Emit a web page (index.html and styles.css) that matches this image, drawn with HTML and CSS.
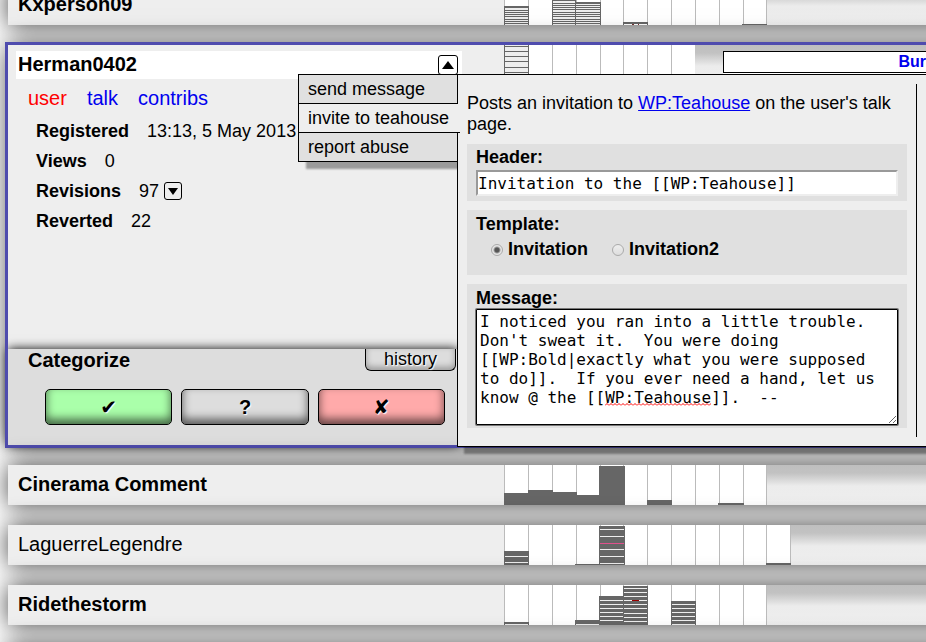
FILE: index.html
```html
<!DOCTYPE html>
<html lang="en">
<head>
<meta charset="utf-8">
<title>Newcomers</title>
<link rel="stylesheet" href="styles.css">
</head>
<body>
<svg class="defs" width="0" height="0" aria-hidden="true">
  <defs>
    <path id="grid" d="M.5 0V40M24.5 0V40M48.5 0V40M72.5 0V40M96.5 0V40M119.5 0V40M143.5 0V40M167.5 0V40M191.5 0V40M215.5 0V40M239.5 0V40M262.5 0V40" stroke="#bbb"/>
  </defs>
</svg>
<main class="list">
  <section class="row">
    <h2 class="name">Kxperson09</h2>
    <svg class="graph" width="263" height="40" aria-hidden="true">
      <use href="#grid"/>
      <path d="M0 21h25v19H0zM48 12h24v28H48zM71 17h26v23H71zM119 37h25v2h-25zM119 39h1v1h-1zM143 39h1v1h-1zM238 39h26v1h-26z" fill="#666"/>
      <path d="M1 23h23v2H1zM1 26h23v1H1zM1 28h23v1H1zM1 30h23v1H1zM1 32h23v2H1zM1 35h23v1H1zM1 37h23v1H1zM1 39h23v1H1z" fill="#eee"/>
      <path d="M49 16h22v2H49zM49 19h22v1H49zM49 21h22v1H49zM49 23h22v1H49zM49 25h22v2H49zM49 28h22v1H49zM49 30h22v1H49zM49 32h22v2H49zM49 35h22v1H49zM49 37h22v1H49zM49 39h22v1H49z" fill="#eee"/>
      <path d="M72 19h24v1H72zM72 21h24v1H72zM72 23h24v1H72zM72 25h24v2H72zM72 28h24v1H72zM72 30h24v1H72zM72 32h24v2H72zM72 35h24v1H72zM72 37h24v1H72zM72 39h24v1H72z" fill="#eee"/>
      <path d="M128 39.500h2M134 39.500h1" stroke="#733"/>
    </svg>
    <div class="rest"></div>
  </section>

  <section class="row open">
    <div class="details">
      <div class="title">
        <h2>Herman0402</h2>
        <button class="toggle" aria-label="Close actions"><svg width="12" height="8" aria-hidden="true"><path d="M6 0L12 8H0z"/></svg></button>
      </div>
      <nav class="links"><a class="missing" href="#user">user</a><a href="#talk">talk</a><a href="#contribs">contribs</a></nav>
      <dl class="facts">
        <div><dt>Registered</dt><dd>13:13, 5 May 2013</dd></div>
        <div><dt>Views</dt><dd>0</dd></div>
        <div><dt>Revisions</dt><dd>97</dd><dd><button class="more" aria-label="Show revisions"><svg width="10" height="7" aria-hidden="true"><path d="M0 0H10L5 7z"/></svg></button></dd></div>
        <div><dt>Reverted</dt><dd>22</dd></div>
      </dl>
      <div class="categorize">
        <div class="cathead"><h3>Categorize</h3><button class="history">history</button></div>
        <div class="choices">
          <button class="choice good" aria-label="Good">✔</button>
          <button class="choice" aria-label="Unsure">?</button>
          <button class="choice bad" aria-label="Bad">✘</button>
        </div>
      </div>
    </div>
    <svg class="graph" width="191" height="40" aria-hidden="true">
      <use href="#grid"/>
      <path d="M0 0h25v40H0z" fill="#666"/>
      <path d="M1 0h23v1H1zM1 2h23v4H1zM1 7h23v4H1zM1 12h23v4H1zM1 17h23v5H1zM1 23h23v4H1zM1 28h23v5H1z" fill="#eee"/>
    </svg>
    <div class="rest"><div class="topic"><a href="#topic">Bur</a></div></div>

    <div class="menu">
      <button>send message</button>
      <button class="current">invite to teahouse</button>
      <button>report abuse</button>
    </div>

    <div class="popup">
      <form class="invite">
        <p>Posts an invitation to <a href="#teahouse">WP:Teahouse</a> on the user's talk page.</p>
        <div class="field">
          <label for="header">Header:</label>
          <input id="header" class="line" type="text" value="Invitation to the [[WP:Teahouse]]">
        </div>
        <fieldset class="field template">
          <legend>Template:</legend>
          <div class="options">
            <label><input type="radio" name="template" checked>Invitation</label>
            <label><input type="radio" name="template">Invitation2</label>
          </div>
        </fieldset>
        <div class="field message">
          <label for="message">Message:</label>
          <div class="editor">
            <textarea id="message" spellcheck="false">I noticed you ran into a little trouble.
Don't sweat it.  You were doing
[[WP:Bold|exactly what you were supposed
to do]].  If you ever need a hand, let us
know @ the [[WP:Teahouse]].  --</textarea>
            <svg class="squiggle" height="3" aria-hidden="true"><defs><pattern id="wave" width="4" height="3" patternUnits="userSpaceOnUse"><path d="M0 2.500L2 .5L4 2.500" fill="none" stroke="red"/></pattern></defs><rect width="100%" height="3" fill="url(#wave)"/></svg>
          </div>
        </div>
      </form>
      <div class="divider"></div>
    </div>
  </section>

  <section class="row">
    <h2 class="name">Cinerama Comment</h2>
    <svg class="graph" width="263" height="40" aria-hidden="true">
      <use href="#grid"/>
      <path d="M0 28h24v12H0zM24 25h25v15H24zM48 27h25v13H48zM72 30h24v10H72zM95 1h26v39H95zM143 35h25v5h-25zM214 38h26v2h-26z" fill="#666"/>
    </svg>
    <div class="rest"></div>
  </section>

  <section class="row">
    <h2 class="name plain">LaguerreLegendre</h2>
    <svg class="graph" width="287" height="40" aria-hidden="true">
      <use href="#grid"/>
      <path d="M286.500 0V40" stroke="#bbb"/>
      <path d="M0 26h25v14H0zM71 39h26v1H71zM95 1h26v39H95zM262 38h25v2h-25z" fill="#666"/>
      <path d="M1 31.500h23M1 37.500h23M96 4.500h24M96 11.500h24M96 24.500h24M96 31.500h24M96 38.500h24" stroke="#eee"/>
      <path d="M96 18.500h24" stroke="#e0508c"/>
    </svg>
    <div class="rest"></div>
  </section>

  <section class="row">
    <h2 class="name">Ridethestorm</h2>
    <svg class="graph" width="263" height="40" aria-hidden="true">
      <use href="#grid"/>
      <path d="M0 37h25v3H0zM71 35h25v5H71zM95 11h25v29H95zM119 1h25v39h-25zM167 16h25v24h-25z" fill="#666"/>
      <path d="M1 39.500h23M72 39.500h23M96 15.500h23M96 19.500h23M96 23.500h23M96 27.500h23M96 31.500h23M96 35.500h23M120 3.500h23M120 7.500h23M120 11.500h23M120 15.500h23M120 19.500h23M120 23.500h23M120 28.500h23M120 32.500h23M120 36.500h23M168 19.500h23M168 23.500h23M168 27.500h23M168 31.500h23M168 35.500h23M168 39.500h23" stroke="#eee"/>
      <path d="M128 15.500h7" stroke="#900"/>
    </svg>
    <div class="rest"></div>
  </section>

  <section class="row"></section>
</main>
</body>
</html>
```

FILE: styles.css
```css
* { box-sizing: border-box; }

html { height: 100%; overflow: hidden; }

body {
  height: 100%;
  margin: 0;
  overflow: hidden;
  background: #fff;
  color: #000;
  font: 18px/21px "Liberation Sans", Arial, sans-serif;
}

h2, h3, p, dl, dd { margin: 0; }

button, input, textarea { font: inherit; color: inherit; margin: 0; }

.defs { position: absolute; }

/* The list is scrolled slightly and runs past the right edge of the window. */
.list {
  display: flex;
  flex-direction: column;
  gap: 20px;
  margin: -15px -40px 0 8px;
}

.row {
  position: relative;
  display: grid;
  grid-template-columns: 496px auto 1fr;
  flex: none;
  min-height: 40px;
  background: #eee;
  box-shadow: 0 0 25px rgba(0, 0, 0, .75);
}

.name { padding: 0 10px; font-size: 20px; line-height: 38px; }
.plain { font-weight: normal; }

.graph { display: block; background: #fff; }

.rest {
  height: 40px;
  background: linear-gradient(#bfbfbf, #c2c2c2 8px, #ececec 21px, #eee);
}

.open { min-height: 400px; outline: 3px solid #4f4cae; }

.details {
  display: flex;
  flex-direction: column;
  width: 454px;
  padding-top: 6px;
}

.title {
  display: flex;
  justify-content: space-between;
  height: 28px;
  margin-left: 8px;
  padding: 0 4px 0 2px;
  background: #fff;
}
.title h2 { font-size: 20px; line-height: 26px; }

.toggle, .more {
  display: flex;
  align-items: center;
  justify-content: center;
  padding: 0;
  border: 1px solid #000;
  border-radius: 3px;
  background: #fff;
}
.toggle { width: 20px; height: 20px; margin-top: 4px; }
.more { width: 18px; height: 18px; background: #eee; }

.links { display: flex; gap: 20px; padding: 6px 20px 0; font-size: 20px; line-height: 26px; }
.links a { color: #00e; text-decoration: none; }
.links .missing { color: #f00; }

.facts { padding: 5px 28px 0; line-height: 30px; }
.facts div { display: flex; align-items: center; height: 30px; }
.facts dt { margin-right: 18px; font-weight: bold; }
.facts dd + dd { margin-left: 5px; }

.categorize {
  width: 450px;
  height: 96px;
  margin-top: auto;
  background: #ddd;
  box-shadow: 0 0 10px #000;
}
.cathead { display: flex; justify-content: space-between; padding: 0 2px 0 20px; }
.cathead h3 { font-size: 20px; line-height: 23px; }

.history {
  width: 91px;
  height: 22px;
  padding: 0;
  border: 1px solid #000;
  border-top: 0;
  border-radius: 0 0 6px 6px;
  background: #ddd;
  box-shadow: inset 0 -3px 6px rgba(0, 0, 0, .3);
  line-height: 19px;
  text-shadow: 1px 1px 1px #fff;
}

.choices { display: flex; gap: 9px; padding: 17px 13px 0 37px; }

.choice {
  flex: 1;
  height: 36px;
  padding: 0;
  border: 1px solid #000;
  border-radius: 5px;
  background: #ddd;
  box-shadow: inset 0 -5px 10px rgba(0, 0, 0, .6);
  font-family: "Liberation Sans", "DejaVu Sans", sans-serif;
  font-size: 20px;
  font-weight: bold;
  line-height: 32px;
  text-shadow: 1px 1px 1px #fff;
}
.good { background: #afa; }
.bad { background: #faa; }

.topic {
  height: 22px;
  margin: 6px 0 0 28px;
  padding-right: 40px;
  border: 1px solid #000;
  border-right: 0;
  background: #fff;
  box-shadow: 0 1px #fff;
  font-size: 16px;
  font-weight: bold;
  line-height: 20px;
  text-align: right;
}
.topic a { color: #00e; text-decoration: none; }

/* Action menu and the form that opens from it */
.menu {
  position: absolute;
  z-index: 3;
  top: 29px;
  left: 290px;
  width: 160px;
  border: solid #000;
  border-width: 1px 0 0 1px;
}
.menu::before {
  content: "";
  position: absolute;
  z-index: -1;
  inset: 0 1px 0 0;
  box-shadow: 7px 7px 2px rgba(0, 0, 0, .35);
  clip-path: inset(0 0 -12px 0);
}
.menu button {
  display: block;
  width: 100%;
  height: 29px;
  padding: 0 9px;
  border: solid #000;
  border-width: 0 1px 1px 0;
  background: #e0e0e0;
  line-height: 28px;
  text-align: left;
}
.menu .current { width: 161px; border-right: 0; background: #eee; }

.popup {
  position: absolute;
  z-index: 2;
  top: 29px;
  left: 449px;
  right: 40px;
  display: flex;
  gap: 9px;
  padding: 9px;
  border: solid #000;
  border-width: 1px 0 1px 1px;
  background: #eee;
  box-shadow: 7px 7px 2px rgba(0, 0, 0, .35);
}
.divider { flex: none; width: 1px; background: #000; }

.invite { flex: 1; min-width: 0; display: flex; flex-direction: column; gap: 9px; padding-bottom: 9px; }
.invite p { padding-top: 9px; }
.invite a { color: #00e; }

.field {
  display: flex;
  flex-direction: column;
  min-width: 0;
  margin: 0;
  padding: 3px 9px 5px;
  border: 0;
  background: #e0e0e0;
  font-weight: bold;
}
.field legend { float: left; padding: 0; }

.line {
  width: 100%;
  height: 26px;
  margin-top: 2px;
  padding: 0;
  border: solid;
  border-width: 2px;
  border-color: #999 #eee #eee #999;
  background: #fff;
  font: 16px/19px "DejaVu Sans Mono", monospace;
}

.template { display: block; height: 65px; padding-top: 4px; }
.options { display: flex; gap: 24px; clear: both; padding: 4px 0 0 15px; }
.options label { display: flex; align-items: center; gap: 5px; }
.options input {
  appearance: none;
  width: 12px;
  height: 12px;
  border: 1px solid #aaa;
  border-radius: 50%;
  background: linear-gradient(#eee, #ddd);
}
.options input:checked { background: radial-gradient(circle, #555 0 2px, #e6e6e6 4px); }

.message { padding: 4px 9px 3px; }
.editor { position: relative; }
.editor textarea {
  display: block;
  width: 100%;
  height: 116px;
  padding: 2px 3px;
  border: 1px solid #000;
  border-radius: 1px;
  background: #fff;
  box-shadow: 0 0 0 1px #777;
  font: 16px/19px "DejaVu Sans Mono", monospace;
  white-space: pre;
  overflow: hidden;
  resize: vertical;
}
.squiggle { position: absolute; top: 94px; left: calc(13ch + 4px); width: 11ch; font: 16px "DejaVu Sans Mono", monospace; }
```
